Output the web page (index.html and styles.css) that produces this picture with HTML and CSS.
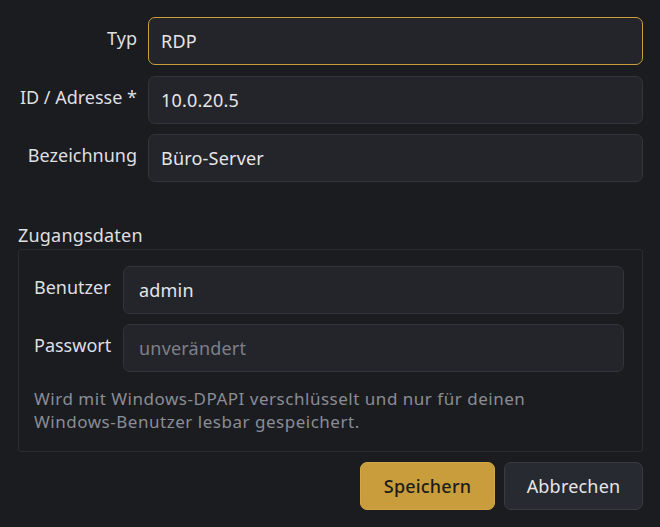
FILE: index.html
```html
<!DOCTYPE html>
<html lang="de">
<head>
<meta charset="utf-8">
<title>Verbindung</title>
<link rel="stylesheet" href="styles.css">
</head>
<body>
<div class="dialog">
  <div class="rows">
    <label class="lbl">Typ</label>
    <div class="field focus">RDP</div>
    <label class="lbl">ID / Adresse *</label>
    <div class="field">10.0.20.5</div>
    <label class="lbl">Bezeichnung</label>
    <div class="field">Büro-Server</div>
  </div>
  <div class="group-title">Zugangsdaten</div>
  <div class="group">
    <div class="rows inner">
      <label class="lbl left">Benutzer</label>
      <div class="field wide">admin</div>
      <label class="lbl left">Passwort</label>
      <div class="field wide placeholder">unverändert</div>
    </div>
    <p class="hint">Wird mit Windows-DPAPI verschlüsselt und nur für deinen Windows-Benutzer lesbar gespeichert.</p>
  </div>
  <div class="actions">
    <button class="btn primary">Speichern</button>
    <button class="btn secondary">Abbrechen</button>
  </div>
</div>
</body>
</html>
```
FILE: styles.css
```css
html, body {
  margin: 0;
  padding: 0;
  background: #1b1c20;
}
body {
  font-family: "Noto Sans", "DejaVu Sans", sans-serif;
  font-size: 18px;
  color: #e4e4e6;
}
.dialog {
  width: 660px;
  height: 527px;
  box-sizing: border-box;
  padding: 17px 17px 18px 18px;
  display: flex;
  flex-direction: column;
}
.rows {
  display: grid;
  grid-template-columns: 119px 1fr;
  column-gap: 11px;
  row-gap: 10.5px;
  align-items: center;
}
.lbl {
  text-align: right;
  color: #dfdfe2;
  line-height: 24px;
  margin-top: -6px;
  white-space: nowrap;
}
.lbl.left {
  text-align: left;
}
.field {
  height: 48px;
  box-sizing: border-box;
  border: 1px solid #33343b;
  border-radius: 7px;
  background: #24252a;
  padding: 0 12px;
  display: flex;
  align-items: center;
  color: #e6e6e8;
  letter-spacing: 0.2px;
}
.field.wide {
  padding: 0 15px;
}
.field.focus {
  border-color: #c99d3c;
}
.field.placeholder {
  color: #7d8089;
}
.group-title {
  margin-top: 41px;
  line-height: 24px;
  color: #dfdfe2;
  letter-spacing: 0.2px;
}
.group {
  margin-top: 2px;
  border: 1px solid #2b2c32;
  border-radius: 3px;
  padding: 16px 18px 18px 15px;
}
.rows.inner {
  grid-template-columns: 78px 1fr;
  row-gap: 10px;
}
.hint {
  margin: 15px 20px 0 0;
  font-size: 17px;
  line-height: 23px;
  color: #8a8d96;
  letter-spacing: 0.52px;
}
.actions {
  margin-top: 10px;
  display: flex;
  justify-content: flex-end;
  gap: 9px;
}
.btn {
  height: 48px;
  border-radius: 7px;
  font-family: inherit;
  font-size: 18px;
  padding: 0;
  cursor: pointer;
  letter-spacing: 0.2px;
}
.btn.primary {
  width: 135px;
  background: #c99c3c;
  border: 1px solid #d3a748;
  color: #1c1c1e;
  font-weight: 500;
}
.btn.secondary {
  width: 139px;
  background: #282a31;
  border: 1px solid #393b43;
  color: #e6e6e8;
}
```
